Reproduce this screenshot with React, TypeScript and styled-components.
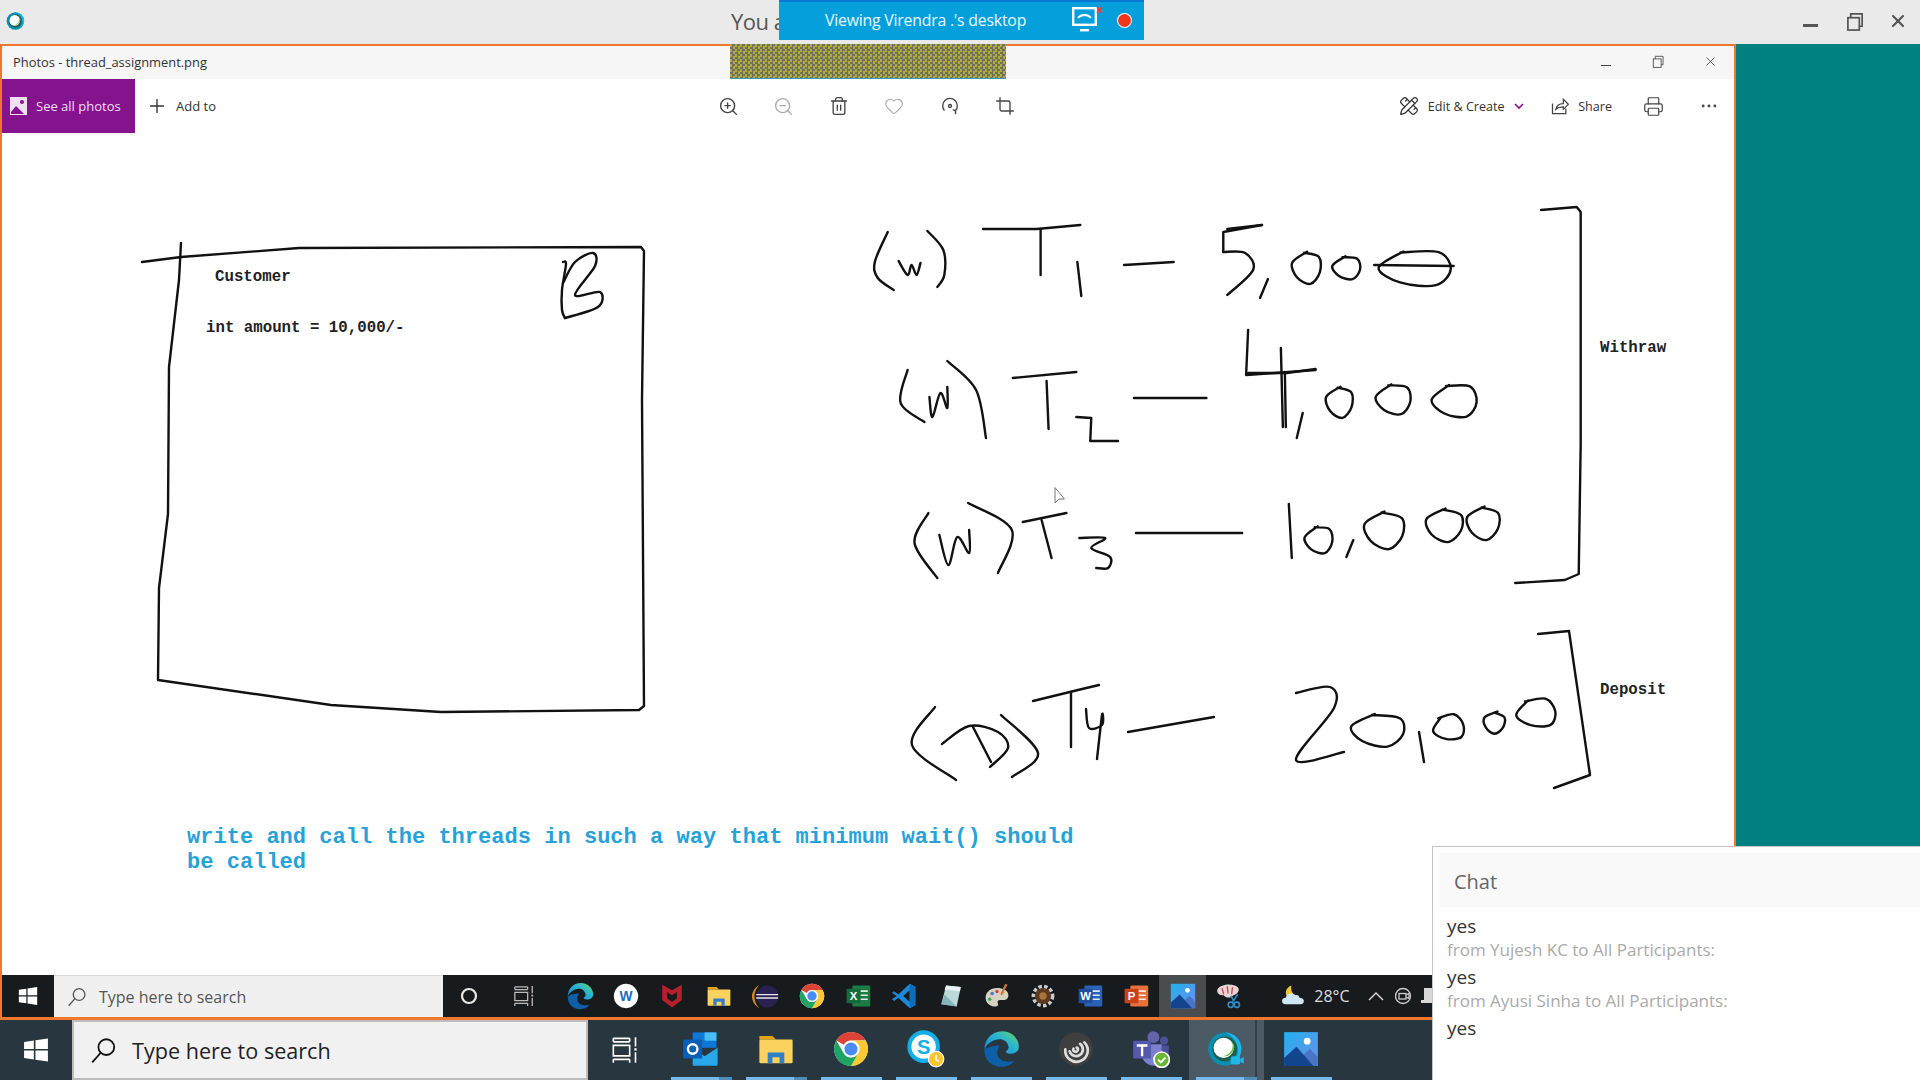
import React from 'react'
import styled, { createGlobalStyle } from 'styled-components'
import { Crop, Heart, MoreHorizontal, PencilRuler, Plus, Printer, Trash2, X, ZoomIn, ZoomOut } from 'lucide-react'

const GlobalStyle = createGlobalStyle`
  html, body { margin: 0; padding: 0; background: #fff; }
  * { box-sizing: border-box; }
`

const UI_FONT = `"Open Sans", "Noto Sans", sans-serif`

const Screen = styled.div`
  position: relative;
  width: 1920px;
  height: 1080px;
  overflow: hidden;
  display: flex;
  flex-direction: column;
  font-family: ${UI_FONT};
`

/* viewer title bar */
const TopBar = styled.header`
  height: 44px;
  flex: none;
  display: flex;
  align-items: center;
  background: #eaeaea;
  padding: 0 12px 2px 6px;
`
const TopTitle = styled.span`
  margin-left: 705px;
  font-size: 22px;
  color: #555;
  letter-spacing: -0.5px;
`
const TopControls = styled.div`
  margin-left: auto;
  display: flex;
  align-items: center;
  gap: 21px;
  color: #555;
`
const WinButton = styled.span<{ $w?: number }>`
  width: ${(p) => p.$w ?? 24}px;
  height: 24px;
  display: flex;
  align-items: center;
  justify-content: center;
`
const Banner = styled.div`
  position: absolute;
  left: 779px;
  top: 0;
  width: 365px;
  height: 40px;
  background: #05a0dc;
  border-top: 2px solid #0a78d0;
  display: flex;
  align-items: center;
  padding: 0 0 2px 46px;
  color: #e9f7ff;
  font-size: 15.8px;
  letter-spacing: -0.2px;
`
const BannerIcons = styled.div`
  margin-left: auto;
  display: flex;
  align-items: center;
  gap: 14px;
  padding: 0 13px 0 0;
`
const RecordDot = styled.span`
  width: 13px;
  height: 13px;
  border-radius: 50%;
  background: #f4361e;
  box-shadow: 0 0 0 1px #fff;
`

/* shared window */
const MainRow = styled.div`
  flex: 1;
  display: flex;
  min-height: 0;
`
const PhotosWindow = styled.section`
  width: 1736px;
  flex: none;
  position: relative;
  display: flex;
  flex-direction: column;
  border-style: solid;
  border-color: #f0782e;
  border-width: 2px 2px 3px 2px;
  background: #fff;
`
const TealDesktop = styled.div`
  flex: 1;
  background: #008080;
`
const TitleBar = styled.div`
  height: 33px;
  flex: none;
  display: flex;
  align-items: center;
  padding: 0 12px 2px 11px;
  background: #f6f6f6;
  font-size: 12.9px;
  color: #333;
`
const WindowControls = styled.div`
  margin-left: auto;
  display: flex;
  align-items: center;
  gap: 28px;
  color: #444;
`
const ScreenShareMask = styled.div`
  position: absolute;
  left: 728px;
  top: -2px;
  width: 276px;
  height: 35px;
  background-color: #a6a63c;
  background-image: repeating-conic-gradient(#6f7060 0 25%, #b0ab3a 0 50%);
  background-size: 5px 5px;
  border-bottom: 1px solid #38a0c8;
`
const Toolbar = styled.div`
  height: 54px;
  flex: none;
  display: grid;
  grid-template-columns: 714px auto 1fr;
  align-items: center;
  font-size: 13px;
  color: #333;
`
const ToolGroup = styled.div`
  display: flex;
  align-items: center;
  height: 100%;
`
const AllPhotos = styled.div`
  width: 133px;
  height: 100%;
  display: flex;
  align-items: center;
  gap: 9px;
  padding-left: 8px;
  background: #86138e;
  color: #f3dff4;
`
const AddTo = styled.div`
  display: flex;
  align-items: center;
  gap: 8px;
  margin-left: 11px;
`
const CenterTools = styled.div`
  display: flex;
  align-items: center;
  gap: 31.4px;
`
const ToolIcon = styled.span<{ $muted?: boolean; $ml?: number }>`
  width: 24px;
  height: 24px;
  flex: none;
  display: flex;
  align-items: center;
  justify-content: center;
  margin-left: ${(p) => p.$ml ?? 0}px;
  color: ${(p) => (p.$muted ? '#aaa' : '#444')};
`
const RightTools = styled.div`
  justify-self: end;
  display: flex;
  align-items: center;
  padding-right: 13px;
  font-size: 12.6px;
`
const TextTool = styled.div<{ $ml?: number; $gap?: number }>`
  display: flex;
  align-items: center;
  gap: ${(p) => p.$gap ?? 9}px;
  margin-left: ${(p) => p.$ml ?? 0}px;
`
const Chevron = styled.span`
  margin-left: 9.5px;
  display: flex;
  color: #86138e;
`

/* image content */
const Canvas = styled.div`
  flex: 1;
  position: relative;
  min-height: 0;
  background: #fff;
`
const Sketch = styled.svg`
  position: absolute;
  inset: 0;
  width: 100%;
  height: 100%;
  filter: blur(0.35px);
`
const Note = styled.span<{ $x: number; $y: number }>`
  position: absolute;
  left: ${(p) => p.$x}px;
  top: ${(p) => p.$y}px;
  font-family: "Liberation Mono", "Courier New", monospace;
  font-weight: 700;
  font-size: 15.75px;
  line-height: 20px;
  color: #222;
  white-space: pre;
`
const Assignment = styled(Note)`
  font-size: 22.06px;
  line-height: 25px;
  color: #27a2d8;
`

/* taskbars */
const InnerTaskbar = styled.div`
  height: 42px;
  flex: none;
  display: flex;
  align-items: center;
  background: #181b1e;
  color: #ddd;
`
const InnerStart = styled.div`
  width: 52px;
  height: 100%;
  display: flex;
  align-items: center;
  justify-content: center;
`
const InnerSearch = styled.div`
  width: 389px;
  height: 100%;
  display: flex;
  align-items: center;
  gap: 12px;
  padding-left: 13px;
  background: #f0f0f0;
  border-top: 1px solid #d8d8d8;
  color: #555;
  font-size: 16px;
`
const InnerApps = styled.div`
  display: flex;
  align-items: center;
  height: 100%;
  padding-left: 3px;
`
const InnerCell = styled.div<{ $active?: boolean; $w?: number }>`
  width: ${(p) => p.$w ?? 46.4}px;
  height: 100%;
  flex: none;
  display: flex;
  align-items: center;
  justify-content: center;
  background: ${(p) => (p.$active ? '#4a4d50' : 'transparent')};
`
const Tray = styled.div`
  display: flex;
  align-items: center;
  margin-left: 28px;
  gap: 8px;
  font-size: 16px;
  color: #ddd;
`
const TrayIcon = styled.span<{ $ml?: number }>`
  display: flex;
  margin-left: ${(p) => p.$ml ?? 0}px;
`
const OuterTaskbar = styled.footer`
  height: 60px;
  flex: none;
  display: flex;
  align-items: stretch;
  background: #27363f;
`
const OuterStart = styled.div`
  width: 72px;
  display: flex;
  align-items: center;
  justify-content: center;
`
const OuterSearch = styled.div`
  width: 516px;
  display: flex;
  align-items: center;
  gap: 15px;
  padding: 1px 0 0 16px;
  background: #f1f1f1;
  border: 2px solid #bdbdbd;
  color: #222;
  font-size: 21.6px;
`
const TaskView = styled.div`
  width: 75.5px;
  display: flex;
  align-items: center;
  justify-content: center;
  padding-right: 2px;
`
const OuterCell = styled.div<{ $active?: boolean; $stacked?: boolean }>`
  position: relative;
  width: 75px;
  display: flex;
  align-items: center;
  justify-content: center;
  padding-bottom: 2px;
  background: ${(p) => (p.$active ? 'linear-gradient(90deg, #4b5a64 0 88%, #333f48 88% 91%, #4b5a64 91%)' : 'transparent')};

  &::after {
    content: '';
    position: absolute;
    left: 7px;
    right: 7px;
    bottom: 0;
    height: 3px;
    background: ${(p) => (p.$stacked ? 'linear-gradient(90deg, #76b9ed 0 79%, #4f8db8 79%)' : '#76b9ed')};
  }
`

/* chat pop-up */
const ChatPanel = styled.aside`
  position: absolute;
  left: 1432px;
  top: 846px;
  right: 0;
  bottom: 0;
  padding: 6px 0 0 6px;
  background: #fff;
  border-top: 1px solid #c6c6c6;
  border-left: 1px solid #c6c6c6;
`
const ChatHeader = styled.div`
  height: 54px;
  display: flex;
  align-items: center;
  padding: 2px 0 0 15px;
  background: #f9f9f9;
  font-size: 20px;
  color: #666;
`
const ChatList = styled.div`
  display: flex;
  flex-direction: column;
  padding: 7px 0 0 8px;
`
const ChatText = styled.div`
  height: 24.6px;
  line-height: 24px;
  font-size: 19px;
  color: #333;
`
const ChatMeta = styled.div`
  height: 26.4px;
  line-height: 21px;
  font-size: 17px;
  color: #aaa;
`

/* hand-drawn strokes, in screen coordinates */
type Pt = [number, number]

const lines: Pt[][] = [
  [[142, 262], [181, 257], [299, 248], [641, 247], [644, 251], [642, 400], [644, 706], [639, 710], [441, 712], [331, 705], [158, 680], [159, 588], [168, 514], [169, 367], [179, 280], [181, 243]],
  [[984, 229], [1038, 229], [1082, 225]],
  [[1042, 229], [1042, 275]],
  [[1079, 262], [1083, 296]],
  [[1126, 265], [1176, 262]],
  [[1265, 225], [1226, 232], [1226, 252]],
  [[1230, 229], [1265, 225]],
  [[1378, 265], [1458, 266]],
  [[1014, 378], [1078, 372]],
  [[1048, 381], [1050, 429]],
  [[1078, 417], [1093, 418], [1092, 441], [1120, 441]],
  [[1136, 398], [1209, 398]],
  [[1251, 330], [1249, 375], [1319, 370]],
  [[1251, 373], [1290, 373], [1319, 369]],
  [[1284, 348], [1286, 427]],
  [[1288, 372], [1289, 427]],
  [[1024, 522], [1068, 513]],
  [[1043, 520], [1053, 558]],
  [[1138, 533], [1245, 533]],
  [[1292, 504], [1295, 558]],
  [[1546, 210], [1582, 207], [1586, 212], [1586, 443], [1584, 574], [1570, 580], [1520, 583]],
  [[1033, 701], [1078, 690], [1099, 685]],
  [[1071, 692], [1071, 747]],
  [[1128, 732], [1168, 725], [1214, 717]],
  [[1538, 634], [1569, 631], [1590, 775], [1554, 788]],
  [[973, 727], [991, 762]],
]

const curves: Pt[][] = [
  [[563, 262], [566, 264], [562, 290], [562, 310], [565, 318]],
  [[563, 283], [575, 262], [593, 253], [595, 266], [575, 295], [600, 292], [598, 307], [565, 318]],
  [[888, 232], [875, 262], [878, 278], [894, 290]],
  [[899, 261], [908, 275], [912, 265], [917, 275], [921, 263]],
  [[928, 231], [944, 250], [945, 275], [938, 287]],
  [[1226, 252], [1248, 253], [1256, 270], [1230, 295]],
  [[1271, 279], [1263, 298]],
  [[908, 370], [901, 403], [925, 422]],
  [[930, 397], [933, 417], [941, 393], [948, 408], [948, 387]],
  [[948, 361], [977, 390], [987, 438]],
  [[1306, 413], [1300, 438]],
  [[929, 513], [915, 543], [938, 578]],
  [[940, 535], [949, 565], [958, 537], [970, 553], [970, 530]],
  [[969, 503], [1013, 530], [999, 573]],
  [[1081, 538], [1107, 538], [1093, 548], [1112, 557], [1110, 568], [1098, 568]],
  [[1357, 540], [1350, 557]],
  [[935, 707], [912, 745], [956, 780]],
  [[942, 744], [969, 726], [998, 732], [1008, 748], [990, 767]],
  [[1001, 715], [1038, 753], [1012, 777]],
  [[1086, 709], [1089, 728], [1102, 725], [1102, 715], [1097, 759]],
  [[1296, 693], [1330, 687], [1334, 708], [1296, 760], [1344, 752]],
  [[1419, 732], [1424, 762]],
]

// x0, y0, x1, y1 of each handwritten zero, and its tilt
const zeros: [number, number, number, number, number][] = [
  [1296, 253, 1325, 283, 8],
  [1337, 257, 1365, 279, 0],
  [1386, 251, 1458, 286, -8],
  [1330, 388, 1357, 417, 10],
  [1381, 385, 1416, 414, 0],
  [1438, 385, 1483, 417, -6],
  [1309, 527, 1337, 553, 0],
  [1369, 513, 1409, 548, 10],
  [1431, 510, 1468, 541, 12],
  [1472, 508, 1505, 539, 12],
  [1353, 715, 1406, 746, 4],
  [1434, 715, 1465, 740, -25],
  [1484, 713, 1505, 733, 20],
  [1518, 699, 1557, 727, -18],
]

// the three withdraw rows were read off a crop slightly too wide
const fitRow = (x: number, y: number) => (x >= 850 && y < 600 ? 850 + (x - 850) * 0.9928 : x)
const fit = (p: Pt[]): Pt[] => p.map(([x, y]) => [fitRow(x, y), y])

const polyline = (p: Pt[]) => p.map((q, i) => `${i ? 'L' : 'M'}${q[0]} ${q[1]}`).join('')

// catmull-rom through the points
const smooth = (p: Pt[]) => {
  let d = `M${p[0][0]} ${p[0][1]}`
  for (let i = 0; i < p.length - 1; i++) {
    const a = p[i - 1] ?? p[i]
    const b = p[i]
    const c = p[i + 1]
    const e = p[i + 2] ?? c
    d += `C${b[0] + (c[0] - a[0]) / 6} ${b[1] + (c[1] - a[1]) / 6} ${c[0] - (e[0] - b[0]) / 6} ${c[1] - (e[1] - b[1]) / 6} ${c[0]} ${c[1]}`
  }
  return d
}

const wobble = [1.04, 1.1, 0.92, 1.08, 0.94, 1.1]
const zeroPath = ([x0, y0, x1, y1, r]: [number, number, number, number, number]) => {
  const cx = (x0 + x1) / 2
  const cy = (y0 + y1) / 2
  const pts: Pt[] = wobble.map((w, k) => {
    const t = ((-110 + k * 60 + r) * Math.PI) / 180
    return [cx + Math.cos(t) * ((x1 - x0) / 2) * w, cy + Math.sin(t) * ((y1 - y0) / 2) * w]
  })
  pts.push([pts[0][0] + 3, pts[0][1] - 1])
  return smooth(pts)
}

const Drawing = () => (
  <Sketch viewBox="2 133 1732 842" fill="none" stroke="#111" strokeWidth={2.4} strokeLinecap="round" strokeLinejoin="round">
    {lines.map((p, i) => <path key={i} d={polyline(fit(p))} />)}
    {curves.map((p, i) => <path key={i} d={smooth(fit(p))} />)}
    {zeros.map((z, i) => (
      <path
        key={i}
        d={zeroPath([fitRow(z[0], z[1]), z[1], fitRow(z[2], z[3]), z[3], z[4]])}
      />
    ))}
    <path d="M1055 488v15l4-4 5 0z" stroke="#777" strokeWidth={1} fill="#fff" />
  </Sketch>
)

/* icons */
type IconProps = { size: number }

const WindowsLogo = ({ size }: IconProps) => (
  <svg width={size} height={size} viewBox="0 0 24 24" fill="#fff">
    <path d="M1 4.5l9-1.3V11H1zM11.5 3L23 1.3V11H11.5zM1 12.5h9v8.2l-9-1.3zM11.5 12.5H23v10.2L11.5 21z" />
  </svg>
)
const SearchGlyph = ({ size, color }: IconProps & { color: string }) => (
  <svg width={size} height={size} viewBox="0 0 24 24" fill="none" stroke={color} strokeWidth={1.6}>
    <circle cx="14.5" cy="9" r="7" />
    <path d="M9.5 14L2 22.5" />
  </svg>
)
const TaskViewGlyph = ({ size, color }: IconProps & { color: string }) => (
  <svg width={size} height={size} viewBox="0 0 24 24" fill="none" stroke={color} strokeWidth={1.4}>
    <path d="M2 2h14M2 5h14M2 8h14v9H2zM2 20h14M2 23v-3M16 23v-3M2 2v3M16 2v3M21 1v8M21 14v9" />
    <path d="M21 10.5v2" strokeWidth={2} />
  </svg>
)
const Webex = ({ size, badge }: IconProps & { badge?: boolean }) => (
  <svg width={size} height={size} viewBox="0 0 32 32">
    <circle cx="15" cy="16" r="14" fill="#0a8fb0" />
    <path d="M15 2a14 14 0 0 1 0 28c6 0 11-6 11-13S21 4 15 2z" fill="#1fb6e8" />
    <circle cx="15" cy="16" r="10.5" fill="#1d5f4f" />
    <circle cx="14" cy="15" r="8.5" fill="#fff" />
    <path d="M21 10c2 5-1 11-8 12 5 1 10-3 10-8 0-2-1-3-2-4z" fill="#6ac04f" />
    {badge && (
      <>
        <rect x="20" y="22" width="8" height="7" rx="1.5" fill="#1fb6e8" />
        <path d="M28 24.5l3-2v6l-3-2z" fill="#1fb6e8" />
      </>
    )}
  </svg>
)
const Edge = ({ size }: IconProps) => (
  <svg width={size} height={size} viewBox="0 0 32 32">
    <defs>
      <linearGradient id="edgeTop" x1="0" y1="1" x2="1" y2="0">
        <stop offset="0" stopColor="#1383d0" />
        <stop offset="0.6" stopColor="#2cb6d0" />
        <stop offset="1" stopColor="#6fd850" />
      </linearGradient>
    </defs>
    <path d="M2 17C2 8 8 1 17 1c8 0 14 6 14 13 0 4-3 6-7 6-2 0-4-1-4-2 2-1 3-3 2-5-1-4-5-6-9-5-6 1-10 5-11 9z" fill="url(#edgeTop)" />
    <path d="M2 17c0 8 6 14 14 14 5 0 9-2 11-5-3 1-8 1-11-1-4-3-4-8-1-12-7 0-12 2-13 4z" fill="#0f5ea8" />
  </svg>
)
const WordCircle = ({ size }: IconProps) => (
  <svg width={size} height={size} viewBox="0 0 32 32">
    <circle cx="16" cy="16" r="15" fill="#fff" />
    <text x="16" y="22" textAnchor="middle" fontSize="17" fontWeight="700" fontFamily="Liberation Sans, sans-serif" fill="#1a6fb8">W</text>
  </svg>
)
const McAfee = ({ size }: IconProps) => (
  <svg width={size} height={size} viewBox="0 0 32 32">
    <path d="M4 2l12 7 12-7v19l-12 9-12-9z" fill="#b5202c" />
    <path d="M10 11l6 4 6-4v8l-6 4-6-4z" fill="#181b1e" />
  </svg>
)
const Folder = ({ size }: IconProps) => (
  <svg width={size} height={size} viewBox="0 0 32 32">
    <path d="M2 5h11l3 3H2z" fill="#e2a315" />
    <rect x="2" y="8" width="28" height="20" rx="1" fill="#fbd25e" />
    <path d="M9 28v-9h14v9h-4v-5h-6v5z" fill="#2f80c8" />
  </svg>
)
const Eclipse = ({ size }: IconProps) => (
  <svg width={size} height={size} viewBox="0 0 32 32">
    <path d="M9 2C2 6 0 12 0 16s2 10 9 14C4 25 3 20 3 16s1-9 6-14z" fill="#d8891e" />
    <circle cx="18" cy="16" r="13" fill="#2b2150" />
    <path d="M5 13h26v1.6H5zM5 17h26v1.6H5z" fill="#e6e6f0" />
  </svg>
)
const Chrome = ({ size }: IconProps) => (
  <svg width={size} height={size} viewBox="0 0 32 32">
    <circle cx="16" cy="16" r="15" fill="#fff" />
    <path d="M3 8.5A15 15 0 0 1 29 8.5H16a7.5 7.5 0 0 0-6.5 3.75z" fill="#db4437" />
    <path d="M29 8.5A15 15 0 0 1 16 31l6.5-11.25A7.5 7.5 0 0 0 16 8.5z" fill="#fcc934" />
    <path d="M16 31A15 15 0 0 1 3 8.5l6.5 11.25A7.5 7.5 0 0 0 22.5 19.75z" fill="#1fa463" />
    <circle cx="16" cy="16" r="7.4" fill="#fff" />
    <circle cx="16" cy="16" r="5.8" fill="#4b8bf5" />
  </svg>
)
const OfficeTile = ({ size, back, front, letter }: IconProps & { back: string; front: string; letter: string }) => (
  <svg width={size} height={size} viewBox="0 0 32 32">
    <rect x="9" y="3" width="22" height="26" rx="1.5" fill={back} />
    <path d="M19 9h9v2h-9zM19 14h9v2h-9zM19 19h9v2h-9z" fill="#fff" opacity="0.85" />
    <rect x="2" y="7" width="17" height="18" rx="1" fill={front} />
    <text x="10.5" y="21" textAnchor="middle" fontSize="14" fontWeight="700" fontFamily="Liberation Sans, sans-serif" fill="#fff">{letter}</text>
  </svg>
)
const VsCode = ({ size }: IconProps) => (
  <svg width={size} height={size} viewBox="0 0 32 32">
    <path d="M23 1l7 3.5v23L23 31 9 18l-5 4-3-2 6-4-6-4 3-2 5 4z" fill="#1b88d8" />
    <path d="M23 9l-8 7 8 7z" fill="#181b1e" />
    <path d="M23 1l7 3.5v23L23 31z" fill="#0e6cb8" />
  </svg>
)
const NotePad = ({ size }: IconProps) => (
  <svg width={size} height={size} viewBox="0 0 32 32">
    <path d="M10 3l18 2-5 24-19-3z" fill="#bcd8d8" />
    <path d="M10 3l18 2-1 5-19-2z" fill="#e8f2f2" />
    <path d="M8 14l-4 12 19 3z" fill="#6fa8ac" opacity="0.7" />
  </svg>
)
const Palette = ({ size }: IconProps) => (
  <svg width={size} height={size} viewBox="0 0 32 32">
    <path d="M16 6C8 6 2 11 2 18s6 11 12 11c3 0 4-2 3-4s0-4 3-4h4c3 0 6-2 6-6 0-6-7-9-14-9z" fill="#d8d2c4" />
    <circle cx="10" cy="13" r="2.2" fill="#3b7fc4" />
    <circle cx="7" cy="20" r="2.2" fill="#3fa354" />
    <circle cx="16" cy="10.5" r="2.2" fill="#d8483c" />
    <circle cx="23" cy="12" r="2.2" fill="#e8b53a" />
    <path d="M26 1l3 1-7 13-2-1z" fill="#c8763a" />
  </svg>
)
const Gear = ({ size }: IconProps) => (
  <svg width={size} height={size} viewBox="0 0 32 32">
    <circle cx="16" cy="16" r="11" fill="none" stroke="#ccc" strokeWidth="6" strokeDasharray="4 2.6" />
    <circle cx="16" cy="16" r="10" fill="#5a3a22" />
    <circle cx="16" cy="16" r="4.5" fill="#a8743c" />
  </svg>
)
const PhotosApp = ({ size }: IconProps) => (
  <svg width={size} height={size} viewBox="0 0 32 32">
    <defs>
      <linearGradient id="photoSky" x1="0" y1="0" x2="1" y2="1">
        <stop offset="0" stopColor="#22b0f0" />
        <stop offset="1" stopColor="#6a8fe4" />
      </linearGradient>
    </defs>
    <rect x="1" y="1" width="30" height="30" fill="url(#photoSky)" />
    <circle cx="21.5" cy="9" r="3" fill="#fff" />
    <path d="M18 21l6-5 7 7v8H16z" fill="#4a74c8" />
    <path d="M1 24l11-10 15 17H1z" fill="#12458e" />
  </svg>
)
const Snip = ({ size }: IconProps) => (
  <svg width={size} height={size} viewBox="0 0 32 32">
    <path d="M3 8c4-6 18-7 23-2 3 3 0 8-5 9-3 4-9 3-11 0-5 1-9-3-7-7z" fill="#e8d4d4" />
    <path d="M8 7l2 7M14 5l1 8M20 6l-1 8" stroke="#c84a5a" strokeWidth="1.6" fill="none" />
    <path d="M18 16l4 6M26 14l-6 9" stroke="#2a8fc8" strokeWidth="1.8" fill="none" />
    <circle cx="18" cy="26" r="3" fill="none" stroke="#2a8fc8" strokeWidth="1.8" />
    <circle cx="25" cy="26" r="3" fill="none" stroke="#2a8fc8" strokeWidth="1.8" />
  </svg>
)
const Weather = ({ size }: IconProps) => (
  <svg width={size} height={size} viewBox="0 0 32 32">
    <path d="M14 3c-6 2-9 9-5 14l8-3c-3-3-4-7-3-11z" fill="#f2c430" />
    <path d="M7 26c-6 0-6-8 0-8 1-5 8-7 12-3 2-1 5 1 5 3 7 0 7 8 1 8z" fill="#cfe6f4" />
  </svg>
)
const Outlook = ({ size }: IconProps) => (
  <svg width={size} height={size} viewBox="0 0 32 32">
    <path d="M9 2h20v13H9z" fill="#0f78d4" />
    <path d="M19 2h10v7H19z" fill="#48c0f4" />
    <path d="M9 15l10 7 11-7v14a1 1 0 0 1-1 1H10a1 1 0 0 1-1-1z" fill="#28a8ea" />
    <rect x="1" y="8" width="16" height="16" rx="1" fill="#0a5fb4" />
    <circle cx="9" cy="16" r="4" fill="none" stroke="#fff" strokeWidth="2" />
  </svg>
)
const Skype = ({ size }: IconProps) => (
  <svg width={size} height={size} viewBox="0 0 32 32">
    <circle cx="14" cy="14" r="12" fill="#fff" stroke="#12aee8" strokeWidth="3.4" />
    <text x="14" y="20" textAnchor="middle" fontSize="17" fontWeight="700" fontFamily="Liberation Sans, sans-serif" fill="#12aee8">S</text>
    <circle cx="24.5" cy="24.5" r="6.5" fill="#fcc62e" stroke="#fff" strokeWidth="1" />
    <path d="M24.5 21v4l2.5 1.5" fill="none" stroke="#fff" strokeWidth="1.3" />
  </svg>
)
const Ring = ({ size }: IconProps) => (
  <svg width={size} height={size} viewBox="0 0 32 32" fill="none">
    <circle cx="16" cy="16" r="15" fill="#3f3f3f" />
    <path d="M7 19a10 10 0 1 1 18 0M11 19a6 6 0 1 1 11-3M15 17a2 2 0 1 1 3 0" transform="rotate(160 16 16)" stroke="#ddd" strokeWidth="2.4" strokeLinecap="round" />
  </svg>
)
const Teams = ({ size }: IconProps) => (
  <svg width={size} height={size} viewBox="0 0 32 32">
    <circle cx="18" cy="6" r="5" fill="#6264a7" />
    <circle cx="27" cy="9" r="3.5" fill="#4c4f9a" />
    <path d="M20 13h11v9c0 3-3 5-6 4z" fill="#4c4f9a" />
    <path d="M9 12h16v12c0 4-3 6-7 6s-8-3-9-6z" fill="#7b7fd0" />
    <rect x="1" y="9" width="15" height="15" rx="1" fill="#5558af" />
    <path d="M4 12h9v2h-3.5v8h-2v-8H4z" fill="#fff" />
    <circle cx="25" cy="25" r="6.5" fill="#6bb535" stroke="#fff" strokeWidth="1.4" />
    <path d="M22 25l2.2 2.2 4-4" fill="none" stroke="#fff" strokeWidth="1.6" />
  </svg>
)
const Cortana = () => (
  <svg width="18" height="18" viewBox="0 0 18 18" fill="none" stroke="#e8e8e8" strokeWidth="2.2">
    <circle cx="9" cy="9" r="7" />
  </svg>
)
const MeetNow = () => (
  <svg width="18" height="22" viewBox="0 0 18 22" fill="none" stroke="#ccc" strokeWidth="1.3">
    <circle cx="8" cy="11" r="7.5" />
    <rect x="4" y="8.5" width="7" height="5.5" />
    <path d="M11 10l3-1.5v5L11 12" />
  </svg>
)
const Monitor = () => (
  <svg width="20" height="22" viewBox="0 0 20 22" fill="#d8d8d8">
    <rect x="3" y="3" width="17" height="12" />
    <rect x="0" y="15" width="15" height="3" />
  </svg>
)
const ShareBanner = () => (
  <svg width="32" height="28" viewBox="0 0 32 28">
    <rect x="1.2" y="2.2" width="22.6" height="16.6" fill="none" stroke="#fff" strokeWidth="2.4" />
    <path d="M6 12c3-4 10-4 13 0" fill="none" stroke="#fff" strokeWidth="2" />
    <rect x="8" y="23" width="9" height="2.4" fill="#fff" />
    <path d="M25 1l5 6M30 1l-5 6" stroke="#e8404a" strokeWidth="1.8" />
  </svg>
)
const RotateGlyph = () => (
  <svg width="22" height="22" viewBox="0 0 24 24" fill="none" stroke="#444" strokeWidth="1.5">
    <path d="M6 17a8 8 0 1 1 12 0l-3-1" />
    <path d="M18 17v4" />
    <circle cx="12" cy="12" r="1.6" />
  </svg>
)
const ShareGlyph = () => (
  <svg width="20" height="20" viewBox="0 0 24 24" fill="none" stroke="#444" strokeWidth="1.5">
    <path d="M3 9v12h16v-6" />
    <path d="M7 16c1-5 5-7 9-7V4l6 6-6 6v-3c-4 0-7 1-9 3z" />
  </svg>
)
const RestoreGlyph = ({ size, stroke }: IconProps & { stroke: number }) => (
  <svg width={size} height={size} viewBox="0 0 20 20" fill="none" stroke="currentColor" strokeWidth={stroke}>
    <rect x="2" y="6" width="12" height="13" />
    <path d="M5 6V2h12v13h-3" />
  </svg>
)
const MinGlyph = ({ w, h }: { w: number; h: number }) => (
  <svg width={w} height={h + 8} viewBox={`0 0 ${w} ${h + 8}`}>
    <rect y={8} width={w} height={h} fill="currentColor" />
  </svg>
)
const PhotosIconSmall = () => (
  <svg width="17" height="18" viewBox="0 0 17 18">
    <rect width="17" height="18" fill="#f3dff4" />
    <circle cx="12" cy="5" r="2" fill="#86138e" />
    <path d="M1 15l5-6 8 8H1z" fill="#86138e" />
  </svg>
)

const innerApps = [
  <Edge size={28} />,
  <WordCircle size={26} />,
  <McAfee size={26} />,
  <Folder size={26} />,
  <Eclipse size={27} />,
  <Chrome size={26} />,
  <OfficeTile size={26} back="#1d7a45" front="#146c3c" letter="X" />,
  <VsCode size={26} />,
  <NotePad size={26} />,
  <Palette size={26} />,
  <Gear size={26} />,
  <OfficeTile size={26} back="#2b62b8" front="#1d4f9e" letter="W" />,
  <OfficeTile size={26} back="#e8703a" front="#c8431c" letter="P" />,
]

const outerApps = [
  { id: 'outlook', icon: <Outlook size={38} />, stacked: true },
  { id: 'files', icon: <Folder size={38} />, stacked: true },
  { id: 'chrome', icon: <Chrome size={36} /> },
  { id: 'skype', icon: <Skype size={38} /> },
  { id: 'edge', icon: <Edge size={38} /> },
  { id: 'ring', icon: <Ring size={36} /> },
  { id: 'teams', icon: <Teams size={38} /> },
  { id: 'webex', icon: <Webex size={38} badge />, active: true, stacked: true },
  { id: 'photos', icon: <PhotosApp size={36} /> },
]

const App: React.FC = () => (
  <Screen>
    <GlobalStyle />

    <TopBar>
      <Webex size={20} />
      <TopTitle>You a</TopTitle>
      <TopControls>
        <WinButton><MinGlyph w={15} h={3} /></WinButton>
        <WinButton><RestoreGlyph size={19} stroke={1.8} /></WinButton>
        <WinButton $w={20}><X size={22} strokeWidth={2.6} /></WinButton>
      </TopControls>
    </TopBar>

    <MainRow>
      <PhotosWindow>
        <TitleBar>
          Photos - thread_assignment.png
          <WindowControls>
            <WinButton><MinGlyph w={10} h={1} /></WinButton>
            <WinButton><RestoreGlyph size={13} stroke={1.3} /></WinButton>
            <WinButton><X size={15} strokeWidth={1.3} /></WinButton>
          </WindowControls>
        </TitleBar>
        <ScreenShareMask />

        <Toolbar>
          <ToolGroup>
            <AllPhotos><PhotosIconSmall />See all photos</AllPhotos>
            <AddTo><Plus size={22} strokeWidth={1.5} />Add to</AddTo>
          </ToolGroup>
          <CenterTools>
            <ToolIcon><ZoomIn size={21} strokeWidth={1.6} /></ToolIcon>
            <ToolIcon $muted><ZoomOut size={21} strokeWidth={1.5} /></ToolIcon>
            <ToolIcon><Trash2 size={20} strokeWidth={1.6} /></ToolIcon>
            <ToolIcon $muted><Heart size={20} strokeWidth={1.3} /></ToolIcon>
            <ToolIcon><RotateGlyph /></ToolIcon>
            <ToolIcon><Crop size={20} strokeWidth={1.6} /></ToolIcon>
          </CenterTools>
          <RightTools>
            <TextTool><PencilRuler size={20} strokeWidth={1.5} />Edit &amp; Create</TextTool>
            <Chevron>
              <svg width="10" height="7" viewBox="0 0 10 7" fill="none" stroke="currentColor" strokeWidth="1.6"><path d="M1 1l4 4 4-4" /></svg>
            </Chevron>
            <TextTool $ml={26} $gap={8}><ShareGlyph />Share</TextTool>
            <ToolIcon $ml={29}><Printer size={21} strokeWidth={1.4} /></ToolIcon>
            <ToolIcon $ml={32}><MoreHorizontal size={20} strokeWidth={1.5} /></ToolIcon>
          </RightTools>
        </Toolbar>

        <Canvas>
          <Drawing />
          <Note $x={213} $y={134}>Customer</Note>
          <Note $x={204} $y={185}>int amount = 10,000/-</Note>
          <Note $x={1598} $y={205}>Withraw</Note>
          <Note $x={1598} $y={547}>Deposit</Note>
          <Assignment $x={185} $y={692}>
            write and call the threads in such a way that minimum wait() should{'\n'}be called
          </Assignment>
        </Canvas>

        <InnerTaskbar>
          <InnerStart><WindowsLogo size={20} /></InnerStart>
          <InnerSearch>
            <SearchGlyph size={20} color="#555" />
            Type here to search
          </InnerSearch>
          <InnerApps>
            <InnerCell><Cortana /></InnerCell>
            <InnerCell $w={64}><TaskViewGlyph size={22} color="#bbb" /></InnerCell>
            {innerApps.map((icon, i) => <InnerCell key={i}>{icon}</InnerCell>)}
            <InnerCell $active><PhotosApp size={26} /></InnerCell>
            <InnerCell><Snip size={28} /></InnerCell>
          </InnerApps>
          <Tray>
            <Weather size={26} />
            28°C
            <TrayIcon $ml={11}>
              <svg width="16" height="10" viewBox="0 0 16 10" fill="none" stroke="#ddd" strokeWidth="1.4"><path d="M1 9l7-7 7 7" /></svg>
            </TrayIcon>
            <TrayIcon $ml={3}><MeetNow /></TrayIcon>
            <TrayIcon><Monitor /></TrayIcon>
          </Tray>
        </InnerTaskbar>
      </PhotosWindow>
      <TealDesktop />
    </MainRow>

    <OuterTaskbar>
      <OuterStart><WindowsLogo size={26} /></OuterStart>
      <OuterSearch>
        <SearchGlyph size={27} color="#111" />
        Type here to search
      </OuterSearch>
      <TaskView><TaskViewGlyph size={28} color="#fff" /></TaskView>
      {outerApps.map((app) => (
        <OuterCell key={app.id} $active={app.active} $stacked={app.stacked}>{app.icon}</OuterCell>
      ))}
    </OuterTaskbar>

    <Banner>
      Viewing Virendra .'s desktop
      <BannerIcons>
        <ShareBanner />
        <RecordDot />
      </BannerIcons>
    </Banner>

    <ChatPanel>
      <ChatHeader>Chat</ChatHeader>
      <ChatList>
        <ChatText>yes</ChatText>
        <ChatMeta>from Yujesh KC to All Participants:</ChatMeta>
        <ChatText>yes</ChatText>
        <ChatMeta>from Ayusi Sinha to All Participants:</ChatMeta>
        <ChatText>yes</ChatText>
      </ChatList>
    </ChatPanel>
  </Screen>
)

export default App
